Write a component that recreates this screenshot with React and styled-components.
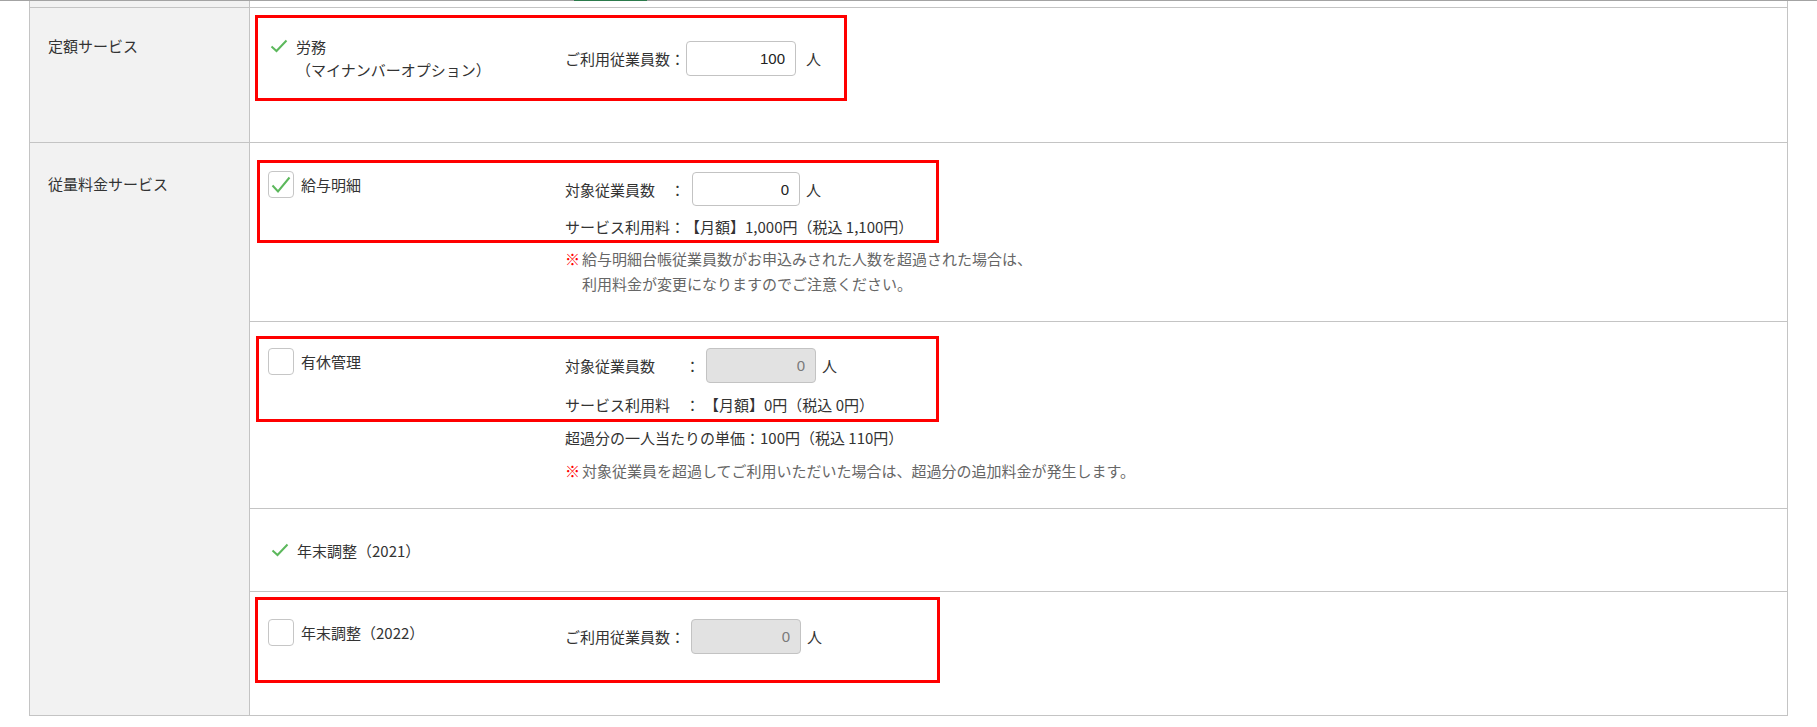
import React from "react";
import styled, { createGlobalStyle } from "styled-components";

const GlobalStyles = createGlobalStyle`
  body {
    margin: 0;
    background: #fff;
    color: #333;
    font-family: "Noto Sans CJK JP", "Noto Sans", sans-serif;
    font-size: 15px;
    text-spacing-trim: space-all;
  }
`;

const TopBar = styled.div`
  display: flex;
  height: 1px;
  padding-left: 574px;
  background: #a3a3a3;
`;

const TabEdge = styled.div`
  width: 73px;
  height: 1px;
  background: #2b7a4b;
`;

const Table = styled.div`
  width: 1759px;
  margin-left: 29px;
  box-sizing: border-box;
  border-left: 1px solid #c4c4c4;
  border-right: 1px solid #c4c4c4;
`;

const Section = styled.div`
  display: grid;
  grid-template-columns: 220px 1fr;
  border-bottom: 1px solid #c4c4c4;
`;

const LabelCell = styled.div`
  box-sizing: border-box;
  background: #f2f2f2;
  border-right: 1px solid #c4c4c4;
  padding: ${(p) => p.$pt || 0}px 0 0 18px;
  line-height: 23px;
`;

const ContentCell = styled.div`
  display: flow-root;
  min-height: ${(p) => p.$h || 0}px;
`;

const SubRow = styled.div`
  display: flow-root;
  height: ${(p) => p.$h}px;
  & + & {
    border-top: 1px solid #c4c4c4;
  }
`;

const PlainRow = styled(SubRow)`
  display: flex;
  align-items: center;
  gap: 8px;
  padding-left: 21px;
  line-height: 23px;
`;

const Highlight = styled.div`
  box-sizing: border-box;
  width: ${(p) => p.$w}px;
  height: ${(p) => p.$h}px;
  margin: ${(p) => p.$mt}px 0 0 ${(p) => p.$ml}px;
  padding: ${(p) => p.$pt}px 0 0 ${(p) => p.$pl}px;
  border: 3px solid #ff0000;
  display: grid;
  grid-template-columns: ${(p) => p.$nameW}px auto;
  align-items: start;
`;

const NameBlock = styled.div`
  display: flex;
  align-items: ${(p) => (p.$top ? "flex-start" : "center")};
  gap: ${(p) => p.$gap || 7}px;
  line-height: 23px;
`;

const TextLine = styled.div`
  white-space: nowrap;
`;

const CheckIcon = styled.svg`
  flex: none;
  margin-top: ${(p) => p.$mt || 0}px;
`;

const Box = styled.span`
  flex: none;
  box-sizing: border-box;
  width: 26px;
  height: 27px;
  border: 1px solid #c6c6c6;
  border-radius: 4px;
  background: #fff;
  display: flex;
  align-items: center;
  justify-content: center;
`;

const Form = styled.div`
  margin-top: ${(p) => p.$mt || 0}px;
`;

const FormLine = styled.div`
  display: flex;
  align-items: center;
  height: ${(p) => p.$h || 23}px;
  margin-top: ${(p) => p.$mt || 0}px;
  line-height: 23px;
  white-space: nowrap;
`;

const FieldLabel = styled.span`
  width: ${(p) => (p.$w ? `${p.$w}px` : "auto")};
`;

const Value = styled.span`
  margin-left: 4px;
`;

const CountInput = styled.input`
  box-sizing: border-box;
  width: ${(p) => p.$w || 110}px;
  height: ${(p) => p.$h || 35}px;
  margin-left: ${(p) => p.$ml || 0}px;
  padding: 0 10px;
  border: 1px solid #c3c3c3;
  border-radius: 4px;
  background: #fff;
  font-family: "Liberation Sans", Arial, sans-serif;
  font-size: 15px;
  color: #222;
  text-align: right;
  outline: none;

  &:disabled {
    background: #e2e2e2;
    color: #7a7a7a;
  }
`;

const Unit = styled.span`
  margin-left: ${(p) => p.$ml || 6}px;
`;

const Note = styled.div`
  display: flex;
  margin: ${(p) => p.$mt || 0}px 0 0 315px;
  line-height: ${(p) => p.$lh || 23}px;
  color: #666;
`;

const Mark = styled.span`
  flex: none;
  width: 17px;
  color: #ff0000;
`;

const Plain = styled.div`
  margin: ${(p) => p.$mt || 0}px 0 0 315px;
  line-height: 23px;
`;

const Check = ({ mt }) => (
  <CheckIcon $mt={mt} width="18" height="14" viewBox="0 0 18 14">
    <path d="M1.5 7.5 L6.5 12 L16.5 1.5" fill="none" stroke="#5cb85c" strokeWidth="2" />
  </CheckIcon>
);

const Checkbox = ({ checked }) => (
  <Box>
    {checked && (
      <svg width="22" height="20" viewBox="0 0 22 20">
        <path d="M2.5 10.5 L8 16.5 L19.5 2.5" fill="none" stroke="#5cb85c" strokeWidth="2" />
      </svg>
    )}
  </Box>
);

const App = () => {
  return (
    <>
      <GlobalStyles />
      <TopBar>
        <TabEdge />
      </TopBar>
      <Table>
        <Section>
          <LabelCell />
          <ContentCell $h={6} />
        </Section>

        <Section>
          <LabelCell $pt={26}>定額サービス</LabelCell>
          <ContentCell $h={134}>
            <Highlight $w={592} $h={86} $mt={7} $ml={5} $pt={17} $pl={12} $nameW={295}>
              <NameBlock $top $gap={8}>
                <Check mt={4} />
                <div>
                  <TextLine>労務</TextLine>
                  <TextLine>（マイナンバーオプション）</TextLine>
                </div>
              </NameBlock>
              <Form $mt={6}>
                <FormLine $h={35}>
                  ご利用従業員数：
                  <CountInput $ml={1} value="100" readOnly />
                  <Unit $ml={10}>人</Unit>
                </FormLine>
              </Form>
            </Highlight>
          </ContentCell>
        </Section>

        <Section>
          <LabelCell $pt={29}>従量料金サービス</LabelCell>
          <ContentCell>
            <SubRow $h={178}>
              <Highlight $w={682} $h={83} $mt={17} $ml={7} $pt={8} $pl={8} $nameW={297}>
                <NameBlock>
                  <Checkbox checked />
                  給与明細
                </NameBlock>
                <Form $mt={1}>
                  <FormLine $h={34}>
                    対象従業員数　：
                    <CountInput $ml={7} $w={108} $h={34} value="0" readOnly />
                    <Unit>人</Unit>
                  </FormLine>
                  <FormLine $mt={9}>サービス利用料：【月額】1,000円（税込 1,100円）</FormLine>
                </Form>
              </Highlight>
              <Note $mt={3} $lh={25}>
                <Mark>※</Mark>
                <div>
                  <TextLine>給与明細台帳従業員数がお申込みされた人数を超過された場合は、</TextLine>
                  <TextLine>利用料金が変更になりますのでご注意ください。</TextLine>
                </div>
              </Note>
            </SubRow>

            <SubRow $h={186}>
              <Highlight $w={683} $h={86} $mt={14} $ml={6} $pt={9} $pl={9} $nameW={297}>
                <NameBlock>
                  <Checkbox />
                  有休管理
                </NameBlock>
                <Form>
                  <FormLine $h={35}>
                    <FieldLabel $w={120}>対象従業員数</FieldLabel>：
                    <CountInput $ml={6} value="0" disabled />
                    <Unit>人</Unit>
                  </FormLine>
                  <FormLine $mt={10}>
                    <FieldLabel $w={120}>サービス利用料</FieldLabel>：
                    <Value>【月額】0円（税込 0円）</Value>
                  </FormLine>
                </Form>
              </Highlight>
              <Plain $mt={4}>超過分の一人当たりの単価：100円（税込 110円）</Plain>
              <Note $mt={10}>
                <Mark>※</Mark>
                <div>対象従業員を超過してご利用いただいた場合は、超過分の追加料金が発生します。</div>
              </Note>
            </SubRow>

            <PlainRow $h={82}>
              <Check />
              年末調整（2021）
            </PlainRow>

            <SubRow $h={123}>
              <Highlight $w={685} $h={86} $mt={5} $ml={5} $pt={19} $pl={10} $nameW={297}>
                <NameBlock>
                  <Checkbox />
                  年末調整（2022）
                </NameBlock>
                <Form>
                  <FormLine $h={35}>
                    ご利用従業員数：
                    <CountInput $ml={6} value="0" disabled />
                    <Unit>人</Unit>
                  </FormLine>
                </Form>
              </Highlight>
            </SubRow>
          </ContentCell>
        </Section>
      </Table>
    </>
  );
};

export default App;
